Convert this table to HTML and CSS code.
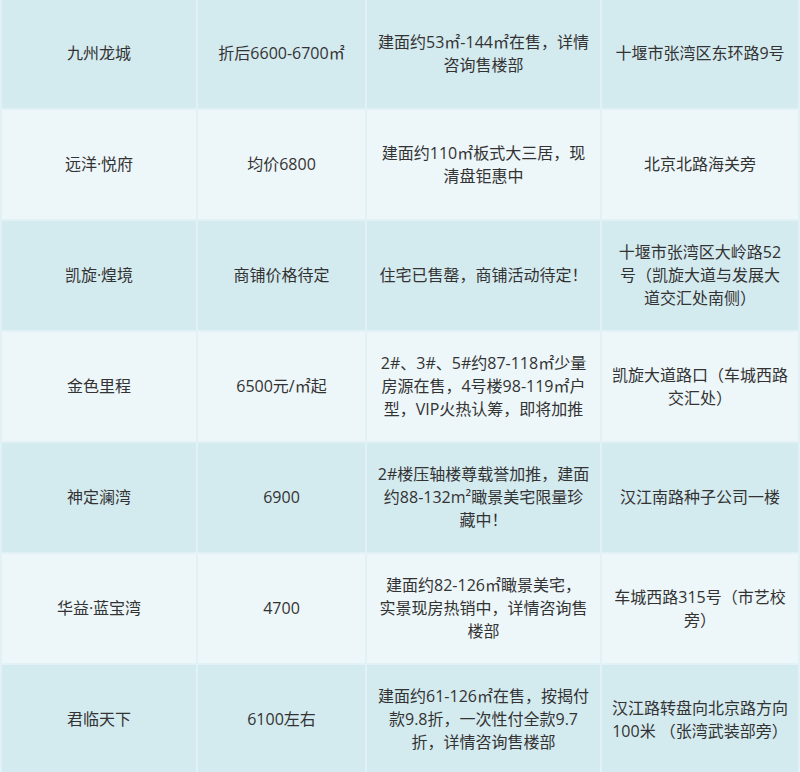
FILE: index.html
```html
<!DOCTYPE html>
<html lang="zh-CN">
<head>
<meta charset="utf-8">
<title>楼盘信息</title>
<link rel="stylesheet" href="styles.css">
</head>
<body>
<table class="estates">
  <colgroup>
    <col class="c-name">
    <col class="c-price">
    <col class="c-desc">
    <col class="c-addr">
  </colgroup>
  <tbody>
    <tr class="row-dark">
      <td>九州龙城</td>
      <td>折后6600-6700㎡</td>
      <td>建面约53㎡-144㎡在售，详情<br>咨询售楼部</td>
      <td>十堰市张湾区东环路9号</td>
    </tr>
    <tr class="row-light">
      <td>远洋·悦府</td>
      <td>均价6800</td>
      <td>建面约110㎡板式大三居，现<br>清盘钜惠中</td>
      <td>北京北路海关旁</td>
    </tr>
    <tr class="row-dark">
      <td>凯旋·煌境</td>
      <td>商铺价格待定</td>
      <td>住宅已售罄，商铺活动待定！</td>
      <td>十堰市张湾区大岭路52<br>号（凯旋大道与发展大<br>道交汇处南侧）</td>
    </tr>
    <tr class="row-light">
      <td>金色里程</td>
      <td>6500元/㎡起</td>
      <td>2#、3#、5#约87-118㎡少量<br>房源在售，4号楼98-119㎡户<br>型，VIP火热认筹，即将加推</td>
      <td>凯旋大道路口（车城西路<br>交汇处）</td>
    </tr>
    <tr class="row-dark">
      <td>神定澜湾</td>
      <td>6900</td>
      <td>2#楼压轴楼尊载誉加推，建面<br>约88-132m²瞰景美宅限量珍<br>藏中！</td>
      <td>汉江南路种子公司一楼</td>
    </tr>
    <tr class="row-light">
      <td>华益·蓝宝湾</td>
      <td>4700</td>
      <td>建面约82-126㎡瞰景美宅，<br>实景现房热销中，详情咨询售<br>楼部</td>
      <td>车城西路315号（市艺校<br>旁）</td>
    </tr>
    <tr class="row-dark">
      <td>君临天下</td>
      <td>6100左右</td>
      <td>建面约61-126㎡在售，按揭付<br>款9.8折，一次性付全款9.7<br>折，详情咨询售楼部</td>
      <td>汉江路转盘向北京路方向<br>100米 （张湾武装部旁）</td>
    </tr>
  </tbody>
</table>
</body>
</html>
```

FILE: styles.css
```css
html, body {
  margin: 0;
  padding: 0;
  background: #e2f1f5;
}

body {
  font-family: "Open Sans", "Noto Sans CJK SC", sans-serif;
  font-size: 16px;
  color: #333;
  overflow: hidden;
}

.estates {
  width: 800px;
  table-layout: fixed;
  border-collapse: separate;
  border-spacing: 2px;
  background: #e2f1f5;
  margin-top: -3px;
}

.c-name { width: 194px; }
.c-price { width: 167px; }
.c-desc { width: 233px; }
.c-addr { width: 196px; }

.estates td {
  height: 109px;
  padding: 0 6px;
  text-align: center;
  vertical-align: middle;
  line-height: 23px;
  white-space: nowrap;
  overflow: visible;
}

.row-dark td {
  background: #d3eaef;
}

.row-light td {
  background: #edf6f9;
}
```
